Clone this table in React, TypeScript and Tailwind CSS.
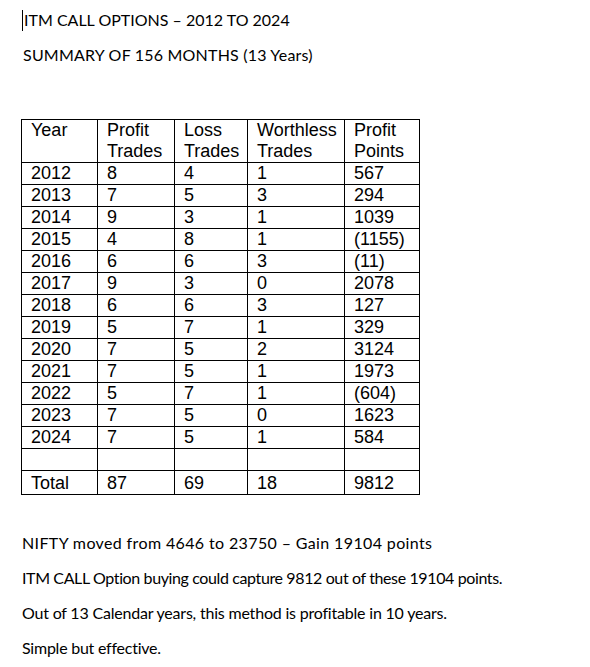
const rows: [string, string, string, string, string][] = [
  ["2012", "8", "4", "1", "567"],
  ["2013", "7", "5", "3", "294"],
  ["2014", "9", "3", "1", "1039"],
  ["2015", "4", "8", "1", "(1155)"],
  ["2016", "6", "6", "3", "(11)"],
  ["2017", "9", "3", "0", "2078"],
  ["2018", "6", "6", "3", "127"],
  ["2019", "5", "7", "1", "329"],
  ["2020", "7", "5", "2", "3124"],
  ["2021", "7", "5", "1", "1973"],
  ["2022", "5", "7", "1", "(604)"],
  ["2023", "7", "5", "0", "1623"],
  ["2024", "7", "5", "1", "584"],
];

const cell = "border border-black pl-[9px] pr-1 py-0 text-left align-top font-normal";

export default function App() {
  return (
    <div className="min-h-[667px] w-[590px] bg-white text-black">
      <div className="pl-[22px] pt-[8px] font-['Lato',sans-serif] text-[16px] leading-[24px]">
        <p className="flex items-center">
          <span className="mr-px inline-block h-[21px] w-px bg-black" />
          ITM CALL OPTIONS – 2012 TO 2024
        </p>
        <p className="mt-[11px] pl-px tracking-[0.2px]">SUMMARY OF 156 MONTHS (13 Years)</p>
      </div>

      <table className="ml-[21px] mt-[52px] table-fixed border-collapse font-['Liberation_Sans',Arial,sans-serif] text-[18px] leading-[21px]">
        <colgroup>
          <col className="w-[76px]" />
          <col className="w-[77px]" />
          <col className="w-[73px]" />
          <col className="w-[97px]" />
          <col className="w-[75px]" />
        </colgroup>
        <thead>
          <tr>
            <th className={cell}>Year</th>
            <th className={cell}>Profit Trades</th>
            <th className={cell}>Loss Trades</th>
            <th className={cell}>Worthless Trades</th>
            <th className={cell}>Profit Points</th>
          </tr>
        </thead>
        <tbody>
          {rows.map((r) => (
            <tr key={r[0]}>
              {r.map((v, i) => (
                <td key={i} className={cell}>
                  {v}
                </td>
              ))}
            </tr>
          ))}
          <tr className="h-[22px]">
            <td className={cell} />
            <td className={cell} />
            <td className={cell} />
            <td className={cell} />
            <td className={cell} />
          </tr>
          <tr className="h-[24px]">
            <td className={`${cell} pt-[2px]`}>Total</td>
            <td className={`${cell} pt-[2px]`}>87</td>
            <td className={`${cell} pt-[2px]`}>69</td>
            <td className={`${cell} pt-[2px]`}>18</td>
            <td className={`${cell} pt-[2px]`}>9812</td>
          </tr>
        </tbody>
      </table>

      <div className="mt-[36px] space-y-[11px] pl-[22px] font-['Lato',sans-serif] text-[16px] leading-[24px]">
        <p className="tracking-[0.37px]">NIFTY moved from 4646 to 23750 – Gain 19104 points</p>
        <p className="tracking-[-0.38px]">ITM CALL Option buying could capture 9812 out of these 19104 points.</p>
        <p className="tracking-[-0.2px]">Out of 13 Calendar years, this method is profitable in 10 years.</p>
        <p className="tracking-[-0.24px]">Simple but effective.</p>
      </div>
    </div>
  );
}
